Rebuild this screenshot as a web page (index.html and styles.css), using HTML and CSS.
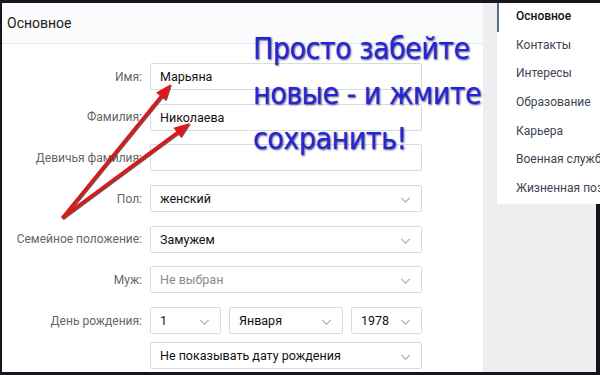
FILE: index.html
```html
<!DOCTYPE html>
<html lang="ru">
<head>
<meta charset="utf-8">
<link rel="stylesheet" href="styles.css">
</head>
<body>
<div class="frame">
  <div class="main">
    <div class="head">Основное</div>
    <div class="form">
      <div class="label">Имя:</div>
      <div class="field"><span>Марьяна</span></div>

      <div class="label">Фамилия:</div>
      <div class="field"><span>Николаева</span></div>

      <div class="label">Девичья фамилия:</div>
      <div class="field"></div>

      <div class="label">Пол:</div>
      <div class="field select"><span>женский</span><svg class="chev" viewBox="0 0 12 7"><path d="M1 1l5 5 5-5"/></svg></div>

      <div class="label">Семейное положение:</div>
      <div class="field select"><span>Замужем</span><svg class="chev" viewBox="0 0 12 7"><path d="M1 1l5 5 5-5"/></svg></div>

      <div class="label">Муж:</div>
      <div class="field select"><span class="ph">Не выбран</span><svg class="chev" viewBox="0 0 12 7"><path d="M1 1l5 5 5-5"/></svg></div>

      <div class="label">День рождения:</div>
      <div class="date">
        <div class="field select day"><span>1</span><svg class="chev" viewBox="0 0 12 7"><path d="M1 1l5 5 5-5"/></svg></div>
        <div class="field select month"><span>Января</span><svg class="chev" viewBox="0 0 12 7"><path d="M1 1l5 5 5-5"/></svg></div>
        <div class="field select year"><span>1978</span><svg class="chev" viewBox="0 0 12 7"><path d="M1 1l5 5 5-5"/></svg></div>
      </div>

      <div class="label"></div>
      <div class="field select last"><span>Не показывать дату рождения</span><svg class="chev" viewBox="0 0 12 7"><path d="M1 1l5 5 5-5"/></svg></div>
    </div>
  </div>
  <div class="side">
    <ul class="menu">
      <li class="active">Основное</li>
      <li>Контакты</li>
      <li>Интересы</li>
      <li>Образование</li>
      <li>Карьера</li>
      <li>Военная служба</li>
      <li>Жизненная позиция</li>
    </ul>
    <div class="side-rest"></div>
  </div>

  <svg class="arrows" viewBox="0 0 600 375" width="600" height="375">
    <line x1="63" y1="217" x2="163" y2="94"/>
    <line x1="63" y1="217" x2="180" y2="130.5"/>
    <polygon points="171,84 165.6,100.2 156.2,92.6"/>
    <polygon points="190,123 180.7,137.3 173.5,127.7"/>
  </svg>

  <div class="note">Просто забейте<br>новые - и жмите<br>сохранить!</div>
</div>
</body>
</html>
```

FILE: styles.css
```css
* { box-sizing: border-box; }
html, body { margin: 0; padding: 0; }
body {
  width: 600px;
  height: 375px;
  overflow: hidden;
  background: #16161c;
  font-family: Roboto, "Open Sans", "Liberation Sans", sans-serif;
}
.frame {
  position: relative;
  display: flex;
  width: 600px;
  height: 375px;
  border-top: 3px solid #16161c;
  border-left: 2px solid #16161c;
  border-bottom: 3px solid #16161c;
  background: #edeef0;
}
.main {
  flex: 0 0 481px;
  width: 481px;
  background: #fff;
}
.head {
  height: 41px;
  background: #fafbfc;
  border-bottom: 1px solid #e7e8ec;
  padding-left: 5px;
  font-size: 14px;
  line-height: 40px;
  color: #222;
}
.form {
  display: grid;
  grid-template-columns: 140px 272px;
  column-gap: 8px;
  row-gap: 13.7px;
  padding-top: 19px;
  align-items: center;
}
.label {
  text-align: right;
  font-size: 12px;
  color: #666;
}
.field {
  position: relative;
  height: 27px;
  border: 1px solid #d7dce1;
  border-radius: 2px;
  background: #fff;
  padding: 0 9px;
  display: flex;
  align-items: center;
  font-size: 12.5px;
  color: #111;
}
.field.last { margin-top: -5.7px; }
.ph { color: #8a8a8a; }
.chev {
  position: absolute;
  right: 10px;
  top: 11px;
  width: 11px;
  height: 6px;
  fill: none;
  stroke: #aab0b8;
  stroke-width: 1.4;
}
.date {
  display: flex;
  gap: 8px;
}
.day { width: 71px; }
.month { width: 114px; }
.year { width: 71px; }

.side {
  flex: 1 1 0;
  min-width: 0;
  margin-left: 14px;
  display: flex;
  flex-direction: column;
}
.menu {
  list-style: none;
  margin: 0;
  padding: 0;
  background: #fff;
  white-space: nowrap;
  overflow: hidden;
}
.menu li {
  height: 28.7px;
  line-height: 26px;
  padding-left: 19px;
  font-size: 12px;
  color: #3c4553;
}
.menu li.active {
  color: #111;
  font-weight: 500;
  border-left: 2px solid #5b6d82;
  padding-left: 17px;
}
.side-rest {
  flex: 1;
  border-right: 4px solid #16161c;
}

.arrows {
  position: absolute;
  left: -2px;
  top: -3px;
  filter: drop-shadow(1px 1px 0.6px rgba(80, 0, 0, 0.7));
}
.arrows line {
  stroke: #d71a1a;
  stroke-width: 3;
  stroke-linecap: round;
}
.arrows polygon {
  fill: #e01818;
}

.note {
  position: absolute;
  left: 251px;
  top: 23px;
  font-family: "DejaVu Sans Condensed", "DejaVu Sans", sans-serif;
  font-stretch: condensed;
  font-size: 30px;
  line-height: 45px;
  color: #2424d8;
  text-shadow: 1px 1px 2px rgba(10, 10, 90, 0.75);
  letter-spacing: -0.5px;
  white-space: nowrap;
}
```
